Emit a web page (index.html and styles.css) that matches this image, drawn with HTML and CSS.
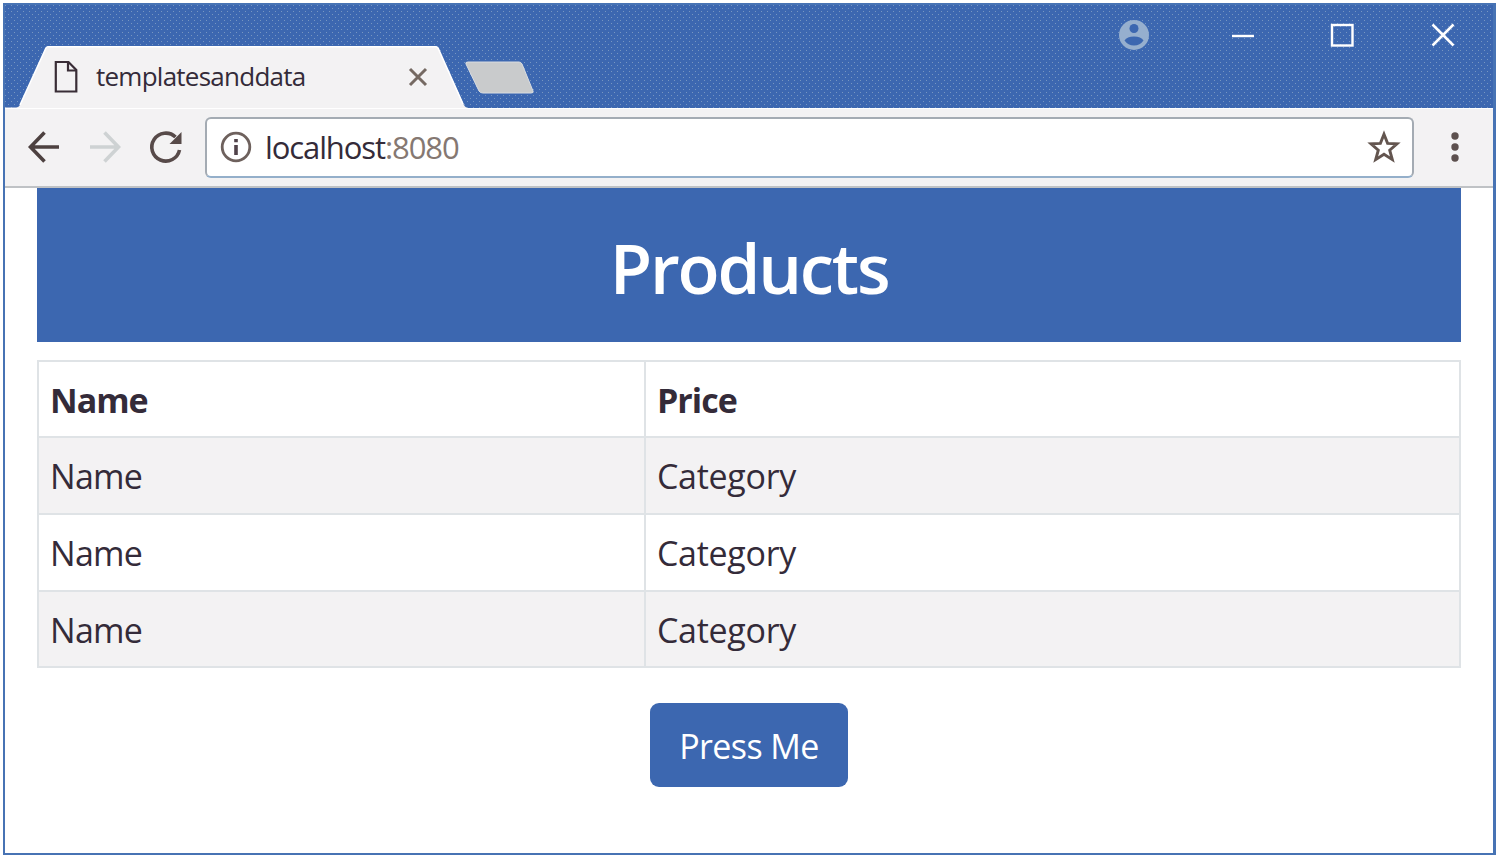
FILE: index.html
```
<!DOCTYPE html>
<html lang="en">
<head>
<meta charset="utf-8">
<title>templatesanddata</title>
<link rel="stylesheet" href="styles.css">
</head>
<body>
<div class="window">
  <div class="titlebar">
    <div class="tab">
      <svg class="tab-shape" width="452" height="62" viewBox="0 0 452 62"><path d="M0 62V61.500H11Q14 61.500 16 57L41 2Q42 0 44 0H430Q432 0 433 2L458 57Q460 61.500 462 61.500V62Z" fill="#f3f2f3"/><path d="M15 59L41 2Q42 .8 44 .8H430Q432 .8 433 2L458 58" fill="none" stroke="#fff" stroke-width="1.600"/></svg>
      <svg class="file-icon" width="24" height="34" viewBox="0 0 24 34" fill="none" stroke="#392d36" stroke-width="2.200"><path d="M1.800 2H14.500L22.300 10V31.500H1.800Z"/><path d="M14 2V10.500H22"/></svg>
      <span class="tab-title">templatesanddata</span>
      <svg class="tab-close" width="20" height="20" viewBox="0 0 20 20"><path d="M2 2L18 18M18 2L2 18" stroke="#756962" stroke-width="3"/></svg>
    </div>
    <svg class="new-tab" width="72" height="34" viewBox="0 0 72 34"><path d="M4 1H55Q57 1 58 3L69 30Q70 32 67 32H19Q16 32 15 30L2 3Q1 1 4 1Z" fill="#c9cbcc" stroke="#d9dde1"/></svg>
    <div class="controls">
      <svg width="32" height="32" viewBox="0 0 32 32"><circle cx="16" cy="16" r="15" fill="#96afce"/><circle cx="16" cy="9.500" r="4.500" fill="#3c67b0"/><path d="M6.500 21.500Q9 17.500 16 17.500T25.500 21.500Q22 26.500 16 26.500T6.500 21.500Z" fill="#3c67b0"/></svg>
      <svg width="24" height="24" viewBox="0 0 24 24"><path d="M1 13H23" stroke="#fff" stroke-width="2.400"/></svg>
      <svg width="24" height="24" viewBox="0 0 24 24"><rect x="1" y="2" width="20.500" height="20.500" fill="none" stroke="#fff" stroke-width="2.400"/></svg>
      <svg width="24" height="24" viewBox="0 0 24 24"><path d="M1.500 1.500L22.500 22.500M22.500 1.500L1.500 22.500" stroke="#fff" stroke-width="2.500"/></svg>
    </div>
  </div>
  <div class="toolbar">
    <svg class="back" width="32" height="32" viewBox="0 0 32 32" fill="none" stroke="#4d4140" stroke-width="3.600"><path d="M31 16H3M16.500 1.500L2.500 16L16.500 30.500"/></svg>
    <svg class="forward" width="32" height="32" viewBox="0 0 32 32" fill="none" stroke="#ced2d3" stroke-width="3.600"><path d="M1 16H29M15.500 1.500L29.500 16L15.500 30.500"/></svg>
    <svg class="reload" width="34" height="34" viewBox="0 0 34 34"><path d="M30.500 20A14 14 0 1 1 26.500 7" fill="none" stroke="#574a49" stroke-width="3.600"/><path d="M32.500 2V14H20.500Z" fill="#574a49"/></svg>
    <div class="address">
      <svg width="32" height="32" viewBox="0 0 32 32"><circle cx="16" cy="16" r="13.800" fill="none" stroke="#6e615d" stroke-width="2.800"/><path d="M16 14V24M16 8V11.200" stroke="#51434a" stroke-width="3.600"/></svg>
      <span class="url">localhost<span class="port">:8080</span></span>
      <svg class="star" width="32" height="32" viewBox="0 0 32 32"><path d="M16 3.200L19.600 12.400L29 12.800L21.700 19.200L24.300 28.600L16 23.300L7.700 28.600L10.300 19.200L3 12.800L12.400 12.400Z" fill="none" stroke="#63554f" stroke-width="2.900"/></svg>
    </div>
    <svg class="menu" width="10" height="32" viewBox="0 0 10 32" fill="#5c504e"><circle cx="5" cy="5" r="3.700"/><circle cx="5" cy="16" r="3.700"/><circle cx="5" cy="27" r="3.700"/></svg>
  </div>
  <main class="page">
    <h1 class="heading"><span>Products</span></h1>
    <div class="table">
      <div class="row head"><span class="cell"><b class="name">Name</b></span><span class="cell"><b class="price">Price</b></span></div>
      <div class="row striped"><span class="cell"><span class="name">Name</span></span><span class="cell"><span class="category">Category</span></span></div>
      <div class="row"><span class="cell"><span class="name">Name</span></span><span class="cell"><span class="category">Category</span></span></div>
      <div class="row striped"><span class="cell"><span class="name">Name</span></span><span class="cell"><span class="category">Category</span></span></div>
    </div>
    <button class="button">Press Me</button>
  </main>
</div>
</body>
</html>
```
FILE: styles.css
```
* { box-sizing: border-box; }
body { margin: 0; background: #fff; font-family: "Open Sans", "Noto Sans", sans-serif; color: #342b39; }
svg { display: block; flex: none; overflow: visible; }
.window { width: 1493px; height: 852px; margin: 3px 0 0 3px; border: 2px solid #4773b4; border-right-width: 3px; display: flex; flex-direction: column; }
.titlebar {
  height: 103px; flex: none; display: flex; align-items: flex-start;
  background-color: #3c67b0;
  background-image: radial-gradient(circle at .5px .5px, #7796c1 .6px, transparent .7px), radial-gradient(circle at .5px .5px, #7796c1 .6px, transparent .7px);
  background-size: 6px 6px;
  background-position: 0 0, 3px 3px;
}
.tab { position: relative; width: 452px; height: 62px; margin-top: 41px; display: flex; align-items: center; padding-left: 49px; }
.tab-shape { position: absolute; left: 0; top: 0; }
.file-icon, .tab-title, .tab-close { position: relative; }
.tab-title { width: 210px; margin: -2px 0 0 18px; font-size: 26px; line-height: 36px; letter-spacing: -.75px; white-space: nowrap; }
.tab-close { margin-left: 102px; }
.new-tab { margin: 56px 0 0 7px; }
.controls { margin-left: auto; padding: 14px 38px 0 0; display: flex; align-items: center; }
.controls svg + svg { margin-left: 76px; }
.controls svg:nth-child(2) { margin-left: 81px; }
.toolbar { height: 80px; flex: none; display: flex; align-items: center; padding: 0 0 1px 23px; background: #f3f2f3; border-bottom: 2px solid #bfc2c5; border-top: 1px solid #fff; }
.forward { margin-left: 29px; }
.reload { margin-left: 28px; }
.address { width: 1209px; height: 61px; margin-left: 22px; padding: 0 12px 0 13px; display: flex; align-items: center; background: #fff; border: 2px solid #a4abb3; border-bottom-color: #94afca; border-radius: 6px; }
.url { margin: -1px 0 0 13px; font-size: 31px; letter-spacing: -1.1px; white-space: nowrap; }
.port { color: #857872; }
.star { margin-left: auto; }
.menu { margin-left: 36px; }
.page { flex: 1; padding: 0 32px; display: flex; flex-direction: column; align-items: center; }
.heading { width: 1424px; height: 154px; margin: 0; flex: none; background: #3c67b0; color: #fff; font-size: 69px; font-weight: 600; line-height: 158px; letter-spacing: -2.2px; text-align: center; }
.table { width: 1424px; height: 308px; flex: none; margin-top: 18px; display: grid; grid-template-rows: 74px 77px 77px 76px; border: 2px solid #dfe3e6; }
.row { display: grid; grid-template-columns: 605px 1fr; }
.row + .row { border-top: 2px solid #dfe3e6; }
.striped { background: #f3f2f3; }
.cell { display: flex; align-items: center; padding: 1px 0 0 11px; font-size: 34px; line-height: 48px; }
.cell + .cell { border-left: 2px solid #dfe3e6; }
.name { letter-spacing: -.7px; }
.category { letter-spacing: -.3px; }
.head .name, .price { letter-spacing: -1px; }
.button { width: 198px; height: 84px; flex: none; margin: 35px 0 0; padding: 1px 0 0; border: 0; border-radius: 9px; background: #3c67b0; color: #fff; font: 34px "Open Sans", sans-serif; letter-spacing: -.6px; }
```
